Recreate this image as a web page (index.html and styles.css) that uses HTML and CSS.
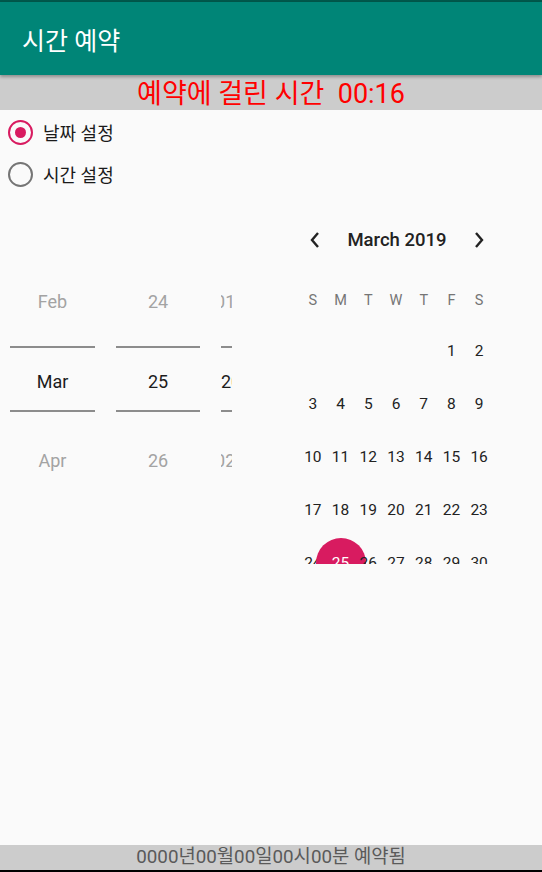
FILE: index.html
```html
<!DOCTYPE html>
<html lang="ko">
<head>
<meta charset="utf-8">
<link rel="stylesheet" href="styles.css">
</head>
<body>
<div class="app">
  <div class="status"></div>
  <header class="toolbar"><span class="title">시간 예약</span></header>
  <div class="elapsed">예약에 걸린 시간&nbsp;&nbsp;00:16</div>
  <div class="radios">
    <label class="radio"><span class="dot on"></span><span class="rlabel">날짜 설정</span></label>
    <label class="radio"><span class="dot"></span><span class="rlabel">시간 설정</span></label>
  </div>
  <div class="picker">
    <div class="spinner">
      <div class="col">
        <div class="item dim top">Feb</div>
        <div class="line"></div>
        <div class="item cur">Mar</div>
        <div class="line"></div>
        <div class="item dim bottom">Apr</div>
      </div>
      <div class="col">
        <div class="item dim top">24</div>
        <div class="line"></div>
        <div class="item cur">25</div>
        <div class="line"></div>
        <div class="item dim bottom">26</div>
      </div>
      <div class="col year">
        <div class="item dim top"><span class="shift">2018</span></div>
        <div class="line"></div>
        <div class="item cur"><span>2019</span></div>
        <div class="line"></div>
        <div class="item dim bottom"><span class="shift">2020</span></div>
      </div>
    </div>
    <div class="calendar">
      <div class="cal-head">
        <svg class="chev" width="14" height="18" viewBox="0 0 14 18"><path d="M10 2 L4 9 L10 16" fill="none" stroke="#222" stroke-width="2.4"/></svg>
        <span class="month">March 2019</span>
        <svg class="chev" width="14" height="18" viewBox="0 0 14 18"><path d="M4 2 L10 9 L4 16" fill="none" stroke="#222" stroke-width="2.4"/></svg>
      </div>
      <div class="dow"><span>S</span><span>M</span><span>T</span><span>W</span><span>T</span><span>F</span><span>S</span></div>
      <div class="days">
        <span></span><span></span><span></span><span></span><span></span><span>1</span><span>2</span>
        <span>3</span><span>4</span><span>5</span><span>6</span><span>7</span><span>8</span><span>9</span>
        <span>10</span><span>11</span><span>12</span><span>13</span><span>14</span><span>15</span><span>16</span>
        <span>17</span><span>18</span><span>19</span><span>20</span><span>21</span><span>22</span><span>23</span>
        <span>24</span><span class="sel">25</span><span>26</span><span>27</span><span>28</span><span>29</span><span>30</span>
        <span>31</span><span></span><span></span><span></span><span></span><span></span><span></span>
      </div>
    </div>
  </div>
  <div class="filler"></div>
  <div class="result">0000년00월00일00시00분 예약됨</div>
  <div class="navline"></div>
</div>
</body>
</html>
```
FILE: styles.css
```css
* { box-sizing: border-box; }
html, body { margin: 0; padding: 0; }
body {
  background: #fafafa;
  font-family: Roboto, "Noto Sans CJK KR", sans-serif;
  color: #212121;
}
.app {
  width: 542px;
  height: 872px;
  display: flex;
  flex-direction: column;
  overflow: hidden;
}
.status { height: 2px; background: #00574b; flex: none; }
.toolbar {
  height: 73px;
  flex: none;
  background: #008577;
  display: flex;
  align-items: center;
  padding-left: 22px;
  box-shadow: 0 2px 3px rgba(0,0,0,0.3);
  position: relative;
  z-index: 1;
}
.title { color: #fff; font-size: 25px; }
.elapsed {
  height: 35px;
  flex: none;
  background: #cccccc;
  color: #ff0000;
  font-size: 27px;
  line-height: 39px;
  text-align: center;
  overflow: hidden;
}
.radios { flex: none; padding-top: 1px; }
.radio {
  height: 42px;
  display: flex;
  align-items: center;
  padding-left: 8px;
}
.dot {
  width: 25px;
  height: 25px;
  border-radius: 50%;
  border: 2.5px solid #757575;
  display: flex;
  align-items: center;
  justify-content: center;
}
.dot.on { border-color: #d81b60; }
.dot.on::after {
  content: "";
  width: 11px;
  height: 11px;
  border-radius: 50%;
  background: #d81b60;
}
.rlabel { margin-left: 10px; font-size: 18px; color: #1a1a1a; }

.picker {
  height: 369px;
  flex: none;
  display: flex;
  overflow: hidden;
}
.spinner {
  width: 232px;
  display: flex;
  gap: 21px;
  padding-left: 10px;
  padding-top: 76px;
  overflow: hidden;
}
.col { width: 85px; flex: none; display: flex; flex-direction: column; }
.col:nth-child(2) { width: 84px; }
.col.year { width: 11px; overflow: hidden; }
.item {
  font-size: 18px;
  text-align: center;
  display: flex;
  align-items: center;
  justify-content: center;
  white-space: nowrap;
}
.item.top { height: 60px; margin-bottom: 15px; }
.item.cur { height: 62px; padding-top: 4px; color: #1c1c1c; }
.item.bottom { height: 60px; margin-top: 18px; }
.item.dim { color: #a3a3a3; }
.line { height: 2px; background: #8c8c8c; flex: none; }
.year .item { justify-content: flex-start; }
.year .shift { margin-left: -16px; }

.calendar {
  margin-left: 67px;
  width: 194px;
  padding-top: 20px;
}
.cal-head {
  height: 50px;
  display: flex;
  align-items: center;
  justify-content: space-between;
  padding: 0 7px 0 9px;
}
.month { font-size: 18.5px; font-weight: 500; color: #222; }
.dow {
  margin-top: 11px;
  height: 48px;
  display: grid;
  grid-template-columns: repeat(7, 1fr);
  align-items: center;
  text-align: center;
  font-size: 14.5px;
  color: #757575;
}
.days {
  display: grid;
  grid-template-columns: repeat(7, 1fr);
  grid-auto-rows: 53px;
  align-items: center;
  text-align: center;
  font-size: 15.5px;
  color: #222;
}
.days span { position: relative; }
.days .sel { color: #fff; z-index: 0; }
.days .sel::before {
  content: "";
  position: absolute;
  left: 50%;
  top: 50%;
  width: 50px;
  height: 50px;
  margin: -25px 0 0 -25px;
  border-radius: 50%;
  background: #d81b60;
  z-index: -1;
}
.filler { flex: 1; }
.result {
  height: 25px;
  flex: none;
  background: #cccccc;
  color: #5a5a5a;
  font-size: 18.8px;
  line-height: 25px;
  text-align: center;
}
.navline { height: 2px; background: #000; flex: none; }
```
